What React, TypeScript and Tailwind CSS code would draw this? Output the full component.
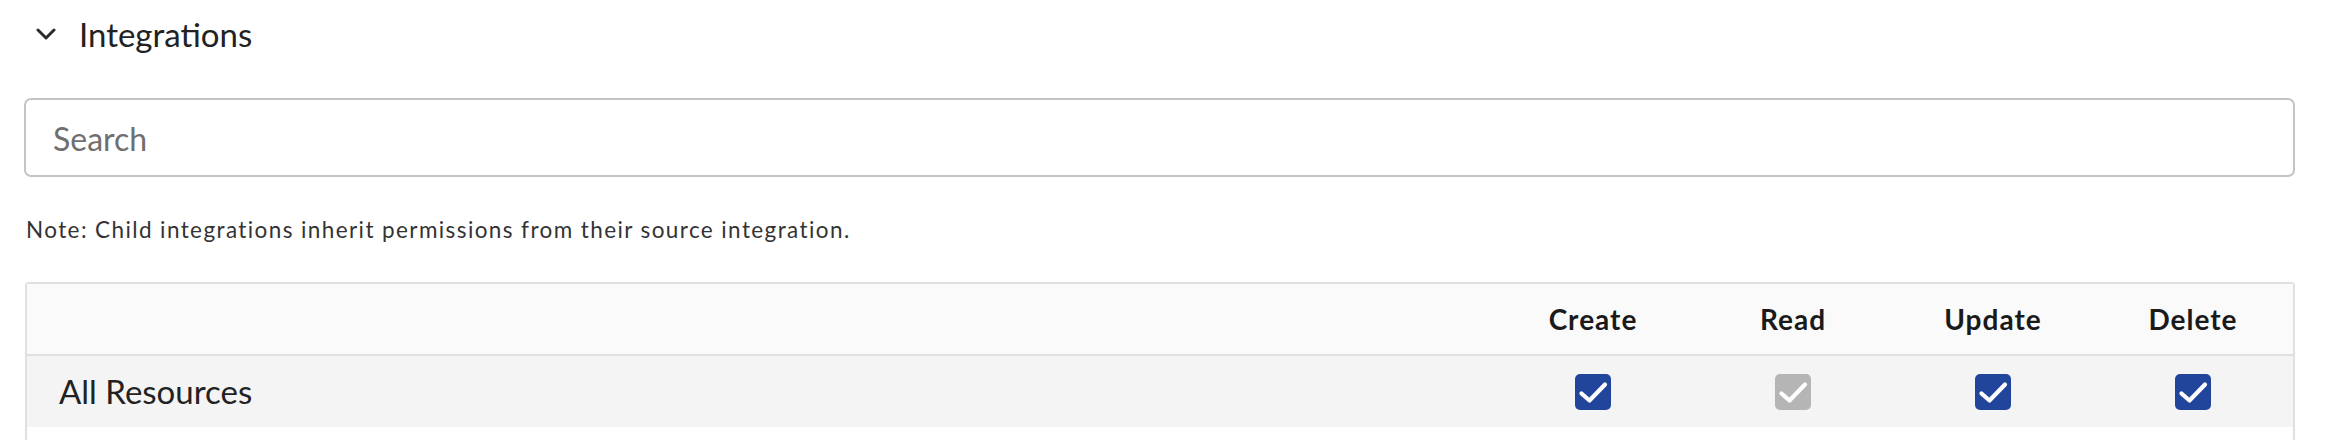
import React from "react";

function Check({ disabled }: { disabled?: boolean }) {
  return (
    <div
      className={`w-[36px] h-[36px] rounded-[5px] flex items-center justify-center ${
        disabled ? "bg-[#b5b5b5]" : "bg-[#21459b]"
      }`}
    >
      <svg width="36" height="36" viewBox="0 0 36 36" fill="none">
        <path
          d="M6.5 19.5 L14.5 26.5 L30 10.5"
          stroke="white"
          strokeWidth="4.2"
          strokeLinecap="round"
          strokeLinejoin="round"
        />
      </svg>
    </div>
  );
}

export default function App() {
  const cols = ["Create", "Read", "Update", "Delete"];
  return (
    <div className="w-full h-[440px] overflow-hidden bg-white font-['Lato',sans-serif]">
      <div className="pl-[24px] pr-[31px]">
        <div className="flex items-center h-[68px]">
          <svg width="20" height="14" viewBox="0 0 20 14" className="ml-[12px]" fill="none">
            <path d="M2 3 L10 11 L18 3" stroke="#2b2b2b" strokeWidth="3" strokeLinecap="round" strokeLinejoin="round" />
          </svg>
          <span className="ml-[23px] text-[33px] text-[#222] leading-none">Integrations</span>
        </div>
        <div className="mt-[30px] h-[79px] border-2 border-[#c4c4c4] rounded-[7px] flex items-center pl-[27px] pt-[3px]">
          <span className="text-[32px] text-[#6f6f6f] leading-none">Search</span>
        </div>
        <div className="mt-[40px] pl-[2px] text-[22.5px] tracking-[1.4px] leading-[25px] text-[#333]">
          Note: Child integrations inherit permissions from their source integration.
        </div>
        <div className="mt-[40px] ml-[1px] border-2 border-b-0 border-[#e0e0e0] rounded-t-[4px]">
          <div className="flex h-[72px] bg-[#fafafa] border-b-2 border-[#e0e0e0] items-center">
            <div className="flex-1" />
            {cols.map((c) => (
              <div key={c} className="w-[200px] text-center text-[28px] tracking-[1px] font-bold text-[#1a1a1a]">
                {c}
              </div>
            ))}
          </div>
          <div className="flex h-[71px] bg-[#f4f4f4] items-center">
            <div className="flex-1 pl-[32px] text-[33px] text-[#222] leading-none">All Resources</div>
            {cols.map((c) => (
              <div key={c} className="w-[200px] flex justify-center">
                <Check disabled={c === "Read"} />
              </div>
            ))}
          </div>
          <div className="h-[40px] bg-white" />
        </div>
      </div>
    </div>
  );
}
